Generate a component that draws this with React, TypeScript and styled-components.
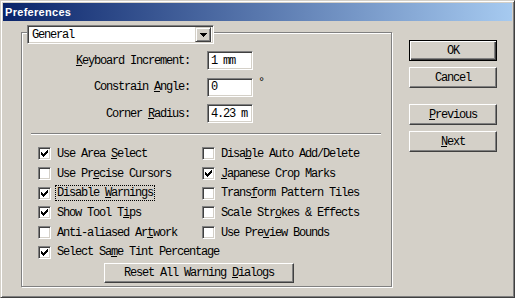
import styled, { createGlobalStyle } from 'styled-components';

const GlobalStyle = createGlobalStyle`
  body {
    margin: 0;
    background: #d4d0c8;
  }
`;

/// STYLES BELOW
/** ***************************************************** */
const Window = styled.div`
  box-sizing: border-box;
  width: 515px;
  height: 298px;
  padding: 2px;
  background: #d4d0c8;
  border: 1px solid;
  border-color: #d4d0c8 #404040 #404040 #d4d0c8;
  box-shadow: inset 1px 1px #fff, inset -1px -1px #808080;
  font-family: 'Liberation Mono', 'Courier New', monospace;
  font-size: 12px;
  letter-spacing: -1.2px;
  color: #000;
`;

const TitleBar = styled.div`
  display: flex;
  align-items: center;
  height: 18px;
  padding-left: 2px;
  background: linear-gradient(to right, #0a246a, #a6caf0);
  color: #fff;
  font-family: 'Liberation Sans', Arial, sans-serif;
  font-weight: bold;
  font-size: 11px;
  letter-spacing: 0.3px;
`;

const Body = styled.div`
  display: flex;
  align-items: flex-start;
  padding: 11px 0 0 18px;
`;

const GroupBox = styled.div`
  box-sizing: border-box;
  display: flex;
  flex-direction: column;
  width: 371px;
  height: 255px;
  border: 1px solid #808080;
  box-shadow: inset 1px 1px #fff, 1px 1px #fff;
`;

const Sunken = styled.div`
  box-sizing: border-box;
  border: 1px solid;
  border-color: #808080 #fff #fff #808080;
  box-shadow: inset 1px 1px #404040, inset -1px -1px #d4d0c8;
  background: #fff;
`;

const Combo = styled(Sunken)`
  display: flex;
  align-items: center;
  justify-content: space-between;
  width: 187px;
  height: 19px;
  margin: -8px 0 0 5px;
  padding: 2px 2px 2px 4px;
`;

const ArrowButton = styled.div`
  box-sizing: border-box;
  display: flex;
  align-items: center;
  justify-content: center;
  width: 16px;
  height: 15px;
  background: #d4d0c8;
  border: 1px solid;
  border-color: #d4d0c8 #404040 #404040 #d4d0c8;
  box-shadow: inset 1px 1px #fff, inset -1px -1px #808080;
`;

const FieldGrid = styled.div`
  display: grid;
  grid-template-columns: 167px 46px 20px;
  grid-auto-rows: 19px;
  row-gap: 7.5px;
  align-items: center;
  margin: 7px 0 0 18px;
`;

const FieldLabel = styled.span`
  padding-right: 17px;
  text-align: right;
  white-space: nowrap;
`;

const TextInput = styled(Sunken)`
  display: flex;
  align-items: center;
  height: 19px;
  padding-left: 3px;
  white-space: nowrap;
  overflow: hidden;
`;

const Unit = styled.span`
  align-self: start;
  margin-top: -2px;
  padding-left: 5px;
`;

const Separator = styled.div`
  margin: 10px 10px 0 9px;
  border-top: 1px solid #808080;
  border-bottom: 1px solid #fff;
`;

const CheckGrid = styled.div`
  display: grid;
  grid-template-columns: 164px 164px;
  grid-template-rows: repeat(6, 19.7px);
  grid-auto-flow: column;
  margin: 9px 0 0 16px;
`;

const CheckRow = styled.label<{ $top?: boolean }>`
  display: flex;
  align-items: center;
  gap: 4px;
  white-space: nowrap;
  ${(props) => (props.$top ? 'grid-row: 1;' : '')}
`;

const Box = styled(Sunken)`
  flex: none;
  width: 13px;
  height: 13px;
  display: flex;
  align-items: center;
  justify-content: center;
`;

const CheckText = styled.span<{ $focused?: boolean }>`
  padding: 0 1px;
  border: 1px dotted ${(props) => (props.$focused ? '#000' : 'transparent')};
`;

const Key = styled.span`
  text-decoration: underline;
`;

const Button = styled.div<{ $default?: boolean }>`
  box-sizing: border-box;
  display: flex;
  align-items: center;
  justify-content: center;
  width: 88px;
  height: 21px;
  background: #d4d0c8;
  border: 1px solid;
  border-color: ${(props) => (props.$default ? '#000' : '#fff #404040 #404040 #fff')};
  box-shadow: ${(props) =>
    props.$default
      ? 'inset 1px 1px #fff, inset -1px -1px #404040, inset -2px -2px #808080'
      : 'inset -1px -1px #808080'};
  white-space: nowrap;
`;

const ResetButton = styled(Button)`
  width: 190px;
  height: 20px;
  margin: 1px 0 0 82px;
`;

const ButtonColumn = styled.div`
  display: flex;
  flex-direction: column;
  gap: 6px;
  margin-left: 17px;
  padding-top: 8px;
`;

const ButtonSpacer = styled.div`
  height: 4px;
`;

/// DRAWINGS BELOW
/** ***************************************************** */
const CHECK = ['......X', '.....XX', 'X...XXX', 'XX.XXX.', 'XXXXX..', '.XXX...', '..X....'];
const checkPath = CHECK.flatMap((row, y) =>
  row.split('').map((c, x) => (c === 'X' ? `M${x} ${y}h1v1h-1z` : ''))
).join('');

function CheckMark() {
  return (
    <svg width="7" height="7" viewBox="0 0 7 7" shapeRendering="crispEdges">
      <path d={checkPath} fill="#000" />
    </svg>
  );
}

function DownArrow() {
  return (
    <svg width="7" height="4" viewBox="0 0 7 4" shapeRendering="crispEdges">
      <path d="M0 0h7v1h-7zM1 1h5v1h-5zM2 2h3v1h-3zM3 3h1v1h-1z" fill="#000" />
    </svg>
  );
}

/// DATA BELOW
/** ***************************************************** */
type Item = { pre: string; key: string; post: string; checked: boolean; focused?: boolean };

const CHECKS: Item[] = [
  { pre: 'Use Area ', key: 'S', post: 'elect', checked: true },
  { pre: 'Use Pr', key: 'e', post: 'cise Cursors', checked: false },
  { pre: 'Disable ', key: 'W', post: 'arnings', checked: true, focused: true },
  { pre: 'Show Tool T', key: 'i', post: 'ps', checked: true },
  { pre: 'Anti-aliased Ar', key: 't', post: 'work', checked: false },
  { pre: 'Select Sa', key: 'm', post: 'e Tint Percentage', checked: true },
  { pre: 'Disa', key: 'b', post: 'le Auto Add/Delete', checked: false },
  { pre: '', key: 'J', post: 'apanese Crop Marks', checked: true },
  { pre: 'Trans', key: 'f', post: 'orm Pattern Tiles', checked: false },
  { pre: 'Scale Str', key: 'o', post: 'kes & Effects', checked: false },
  { pre: 'Use Pre', key: 'v', post: 'iew Bounds', checked: false },
];

const FIELDS = [
  { pre: '', key: 'K', post: 'eyboard Increment:', value: '1 mm', unit: '' },
  { pre: 'Constrain ', key: 'A', post: 'ngle:', value: '0', unit: '°' },
  { pre: 'Corner ', key: 'R', post: 'adius:', value: '4.23 m', unit: '' },
];

///  COMPONENT BELOW
/** ***************************************************** */
export default function App() {
  return (
    <>
      <GlobalStyle />
      <Window>
        <TitleBar>Preferences</TitleBar>
        <Body>
          <GroupBox>
            <Combo>
              <span>General</span>
              <ArrowButton>
                <DownArrow />
              </ArrowButton>
            </Combo>

            <FieldGrid>
              {FIELDS.flatMap((f) => [
                <FieldLabel key={`l-${f.post}`}>
                  {f.pre}
                  <Key>{f.key}</Key>
                  {f.post}
                </FieldLabel>,
                <TextInput key={`i-${f.post}`}>{f.value}</TextInput>,
                <Unit key={`u-${f.post}`}>{f.unit}</Unit>,
              ])}
            </FieldGrid>

            <Separator />

            <CheckGrid>
              {CHECKS.map((c, i) => (
                <CheckRow key={i} $top={i === 6}>
                  <Box>{c.checked && <CheckMark />}</Box>
                  <CheckText $focused={c.focused}>
                    {c.pre}
                    <Key>{c.key}</Key>
                    {c.post}
                  </CheckText>
                </CheckRow>
              ))}
            </CheckGrid>

            <ResetButton>
              Reset All Warning&nbsp;<Key>D</Key>ialogs
            </ResetButton>
          </GroupBox>

          <ButtonColumn>
            <Button $default>OK</Button>
            <Button>Cancel</Button>
            <ButtonSpacer />
            <Button>
              <Key>P</Key>revious
            </Button>
            <Button>
              <Key>N</Key>ext
            </Button>
          </ButtonColumn>
        </Body>
      </Window>
    </>
  );
}
